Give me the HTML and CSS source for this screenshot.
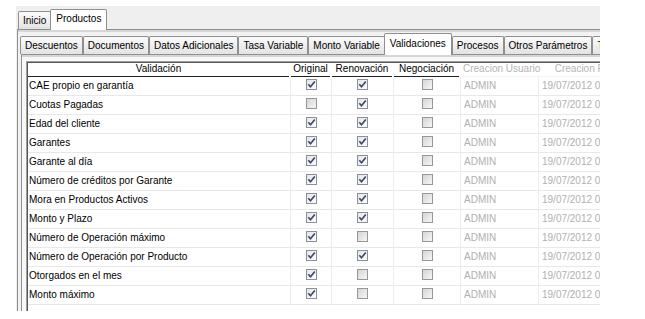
FILE: index.html
```html
<!DOCTYPE html>
<html lang="es">

<head>
  <meta charset="utf-8">
  <title>Productos - Validaciones</title>
  <link rel="stylesheet" href="styles.css">
</head>

<body>
  <div class="window">
    <div class="tabs tabs-main">
      <div class="tab">Inicio</div>
      <div class="tab active">Productos</div>
    </div>

    <div class="panel panel-main">
      <div class="tabs tabs-sub">
        <div class="tab">Descuentos</div>
        <div class="tab">Documentos</div>
        <div class="tab">Datos Adicionales</div>
        <div class="tab">Tasa Variable</div>
        <div class="tab">Monto Variable</div>
        <div class="tab active">Validaciones</div>
        <div class="tab">Procesos</div>
        <div class="tab">Otros Parámetros</div>
        <div class="tab">Tasas</div>
      </div>

      <div class="panel panel-sub">
        <div class="grid" id="grid">
          <div class="th th-name">Validación</div>
          <div class="th">Original</div>
          <div class="th">Renovación</div>
          <div class="th">Negociación</div>
          <div class="th th-off th-left">Creacion Usuario</div>
          <div class="th th-off">Creacion Fecha</div>
        </div>
      </div>
    </div>
  </div>

  <script>
    var rows = [
      ["CAE propio en garantía", 1, 1, 0],
      ["Cuotas Pagadas", 0, 1, 0],
      ["Edad del cliente", 1, 1, 0],
      ["Garantes", 1, 1, 0],
      ["Garante al día", 1, 1, 0],
      ["Número de créditos por Garante", 1, 1, 0],
      ["Mora en Productos Activos", 1, 1, 0],
      ["Monto y Plazo", 1, 1, 0],
      ["Número de Operación máximo", 1, 0, 0],
      ["Número de Operación por Producto", 1, 1, 0],
      ["Otorgados en el mes", 1, 0, 0],
      ["Monto máximo", 1, 0, 0]
    ];

    var check = '<svg width="9" height="9" viewBox="0 0 9 9"><path d="M1.3 4.3 L3.5 6.8 L7.8 1.5" fill="none" stroke="#3b4a6b" stroke-width="1.7"/></svg>';

    function box(on) {
      return '<div class="td td-box"><span class="cb' + (on ? ' on' : '') + '">' + (on ? check : '') + '</span></div>';
    }

    var grid = document.getElementById("grid");
    var html = "";
    rows.forEach(function (r) {
      html += '<div class="td td-name">' + r[0] + '</div>';
      html += box(r[1]) + box(r[2]) + box(r[3]);
      html += '<div class="td td-off">ADMIN</div>';
      html += '<div class="td td-off">19/07/2012 05:32:10</div>';
    });
    grid.insertAdjacentHTML("beforeend", html);
  </script>
</body>

</html>
```

FILE: styles.css
```css
body {
  margin: 0;
  background-color: #ffffff;
  font-family: 'Liberation Sans', Arial, sans-serif;
  font-size: 10px;
  color: #000000;
}

.window {
  margin: 6px 0 0 16px;
  width: 584px;
  height: 305px;
  background-color: #efefef;
  overflow: hidden;
}

/* tab strips */
.tabs {
  display: flex;
  align-items: flex-end;
  white-space: nowrap;
}

.tabs-main {
  height: 23px;
  padding-left: 2px;
}

.tabs-sub {
  height: 19px;
  margin-left: -1px;
}

.tab {
  height: 17px;
  line-height: 17px;
  padding: 0 4px;
  border: 1px solid #8f8f8f;
  border-bottom: none;
  border-radius: 2px 2px 0 0;
  background: linear-gradient(#fbfbfb, #e3e3e3);
}

.tab.active {
  height: 20px;
  line-height: 18px;
  padding: 0 5px;
  margin: 0 0 -1px -1px;
  background: #ffffff;
  position: relative;
  z-index: 1;
}

.tabs-sub .tab.active {
  height: 21px;
  line-height: 19px;
}

/* panels */
.panel {
  border-top: 1px solid #8f8f8f;
  border-left: 1px solid #8f8f8f;
  box-shadow: inset 0 2px 0 #d6d6d6;
}

.panel-main {
  margin-left: 1px;
  height: 300px;
  padding: 5px 0 0 3px;
  background-color: #f2f2f2;
}

.panel-sub {
  height: 260px;
  padding: 6px 0 0 4px;
  background-color: #f8f8f8;
}

/* validation table */
.grid {
  display: grid;
  grid-template-columns: 263px 41px 62px 67px 78px 104px;
  grid-auto-rows: 19px;
  grid-template-rows: 15px;
  height: 260px;
  background-color: #ffffff;
  border-top: 1px solid #a0a0a0;
  border-left: 1px solid #a0a0a0;
  box-shadow: inset 1px 1px 0 #555555;
  padding-left: 1px;
}

.th {
  text-align: center;
  line-height: 14px;
  border-bottom: 1px solid #222222;
  margin-right: 2px;
  white-space: nowrap;
}

.th-off {
  color: #b4b4b4;
  border-bottom-color: #f4f4f4;
}

.th-left {
  text-align: left;
  padding-left: 2px;
  margin-right: 0;
}

.td {
  line-height: 18px;
  border-bottom: 1px solid #e8e8e8;
  border-right: 1px solid #ededed;
  white-space: nowrap;
  overflow: hidden;
}

.td-name {
  padding-left: 1px;
}

.td-off {
  color: #b0b0b0;
  padding-left: 3px;
}

.td-box {
  display: flex;
  justify-content: center;
  align-items: center;
  padding-bottom: 3px;
}

.cb {
  display: flex;
  align-items: center;
  justify-content: center;
  width: 9px;
  height: 9px;
  border: 1px solid #979797;
  background: linear-gradient(135deg, #d5d5d5, #f6f6f6);
}

.cb.on {
  border-color: #8a8f9a;
  background: linear-gradient(135deg, #e6e6e6, #fdfdfd);
}
```
